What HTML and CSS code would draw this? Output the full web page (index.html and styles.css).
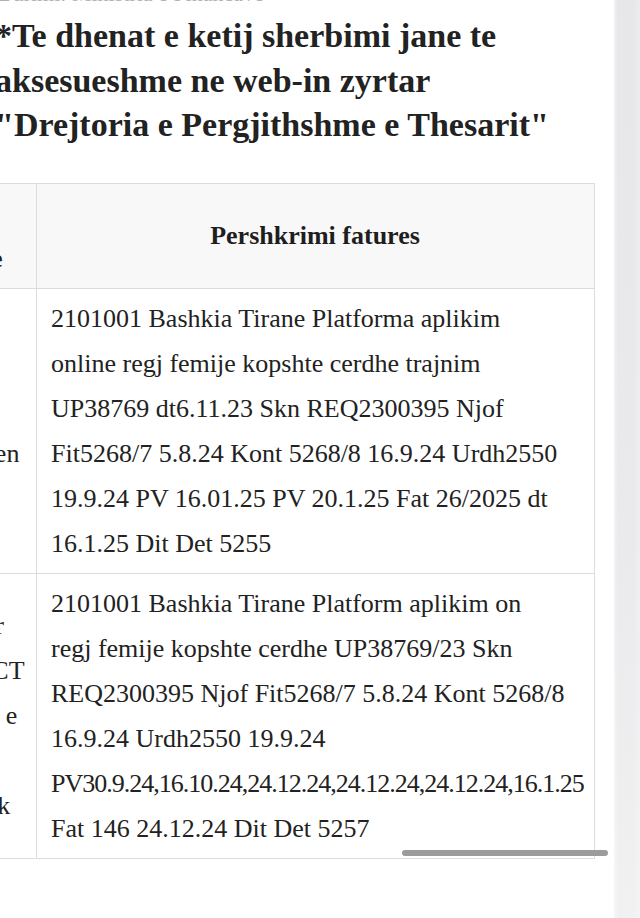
FILE: index.html
```html
<!DOCTYPE html>
<html lang="sq">
<head>
<meta charset="utf-8">
<title>Faturat e Bashkise Tirane</title>
<link rel="stylesheet" href="styles.css">
</head>
<body>
<div class="screen">
  <main class="page">
    <p class="crumb">Burimi: Ministria e Financave</p>
    <h2 class="note">*Te dhenat e ketij sherbimi jane te<br>aksesueshme ne web-in zyrtar<br>"Drejtoria e Pergjithshme e Thesarit"</h2>
    <div class="table-wrap">
      <table class="invoices">
        <colgroup><col class="col-party"><col class="col-desc"></colgroup>
        <thead>
          <tr>
            <th class="party">Furnitori /<br>Pala Tregtare</th>
            <th class="desc-head">Pershkrimi fatures</th>
          </tr>
        </thead>
        <tbody>
          <tr>
            <td class="party">Sherbime<br>ne Teknologjien</td>
            <td class="desc">2101001 Bashkia Tirane Platforma aplikim<br>online regj femije kopshte cerdhe trajnim<br>UP38769 dt6.11.23 Skn REQ2300395 Njof<br>Fit5268/7 5.8.24 Kont 5268/8 16.9.24 Urdh2550<br>19.9.24 PV 16.01.25 PV 20.1.25 Fat 26/2025 dt<br>16.1.25 Dit Det 5255</td>
          </tr>
          <tr>
            <td class="party">Teknologji per<br>Sherbimeve ICT<br>Konsulencave e<br>per Bashkite<br>Solutions Shpk</td>
            <td class="desc">2101001 Bashkia Tirane Platform aplikim on<br>regj femije kopshte cerdhe UP38769/23 Skn<br>REQ2300395 Njof Fit5268/7 5.8.24 Kont 5268/8<br>16.9.24 Urdh2550 19.9.24<br><span class="dates">PV30.9.24,16.10.24,24.12.24,24.12.24,24.12.24,16.1.25</span><br>Fat 146 24.12.24 Dit Det 5257</td>
          </tr>
        </tbody>
      </table>
      <div class="scroll-thumb"></div>
    </div>
  </main>
  <div class="edge"></div>
</div>
</body>
</html>
```

FILE: styles.css
```css
html, body {
  margin: 0;
  padding: 0;
  background: #ffffff;
}

body {
  font-family: "Liberation Serif", "Times New Roman", serif;
  color: #222222;
}

.screen {
  display: flex;
  width: 640px;
  height: 918px;
  overflow: hidden;
}

.page {
  flex: none;
  width: 614px;
  overflow: hidden;
}

.edge {
  flex: 1;
  background:
    linear-gradient(to right, rgba(255,255,255,0.45), rgba(255,255,255,0) 4px, rgba(255,255,255,0) 75%, rgba(255,255,255,0.25)),
    linear-gradient(to bottom, #e7e7e9, #eaeaec 60%, #f1f1f2);
}

.crumb {
  margin: -19px 0 0 -2px;
  font-size: 22px;
  line-height: 26px;
  color: #b0b0b0;
  white-space: nowrap;
}

.note {
  margin: 7px 0 0 -5px;
  font-size: 34px;
  line-height: 44.5px;
  font-weight: 700;
  color: #222222;
  white-space: nowrap;
}

.table-wrap {
  position: relative;
  width: 761px;
  margin: 35px 0 0 -167px;
}

.invoices {
  width: 761px;
  table-layout: fixed;
  border-collapse: collapse;
  font-size: 26px;
  line-height: 45px;
}

.col-party { width: 203px; }
.col-desc { width: 558px; }

.invoices th,
.invoices td {
  border: 1px solid #dcdcdc;
  padding: 7px 15px 7px 14px;
  white-space: nowrap;
  vertical-align: middle;
  text-align: left;
}

.invoices .party {
  padding-left: 18px;
}

.invoices thead th {
  background: #f8f8f8;
  font-weight: 700;
  color: #1e1e1e;
}

.invoices th.desc-head {
  text-align: center;
}

.dates {
  letter-spacing: -1px;
}

.scroll-thumb {
  position: absolute;
  left: 569px;
  top: 667px;
  width: 206px;
  height: 6px;
  border-radius: 3px;
  background: #9b9b9b;
}
```
